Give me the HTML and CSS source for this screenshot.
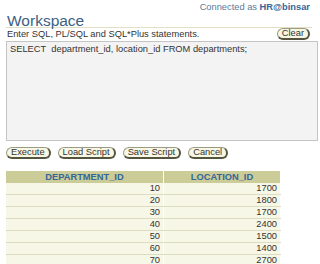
FILE: index.html
```html
<!DOCTYPE html>
<html lang="en">
<head>
  <meta charset="UTF-8" />
  <title>Workspace</title>
  <link rel="stylesheet" href="styles.css">
</head>
<body>
  <div class="topbar">Connected as <b>HR@binsar</b></div>
  <div class="page">
    <h1>Workspace</h1>
    <div class="hint-row">
      <span class="hint">Enter SQL, PL/SQL and SQL*Plus statements.</span>
      <button class="button">Clear</button>
    </div>
    <div class="editor">SELECT&nbsp; department_id, location_id FROM departments;</div>

    <div class="actions">
      <button class="button">Execute</button>
      <button class="button">Load Script</button>
      <button class="button">Save Script</button>
      <button class="button">Cancel</button>
    </div>

    <table class="results">
      <tr><th>DEPARTMENT_ID</th><th>LOCATION_ID</th></tr>
      <tr><td>10</td><td>1700</td></tr>
      <tr><td>20</td><td>1800</td></tr>
      <tr><td>30</td><td>1700</td></tr>
      <tr><td>40</td><td>2400</td></tr>
      <tr><td>50</td><td>1500</td></tr>
      <tr><td>60</td><td>1400</td></tr>
      <tr><td>70</td><td>2700</td></tr>
    </table>
  </div>
</body>
</html>
```

FILE: styles.css
```css
body {
  font-family: 'Liberation Sans', Arial, sans-serif;
  background-color: #ffffff;
  color: #333333;
  margin: 0;
  font-size: 9.3px;
}

.topbar {
  height: 14px;
  line-height: 14px;
  text-align: right;
  padding-right: 10px;
  color: #5a7a99;
}

.topbar b {
  color: #336699;
}

.page {
  padding-left: 6px;
  padding-right: 2px;
}

h1 {
  margin: 1px 6px 0 0;
  padding-left: 1px;
  font-size: 15.5px;
  font-weight: normal;
  line-height: 12px;
  color: #3a6185;
  border-bottom: 1px solid #e2dfc4;
}

.hint-row {
  display: flex;
  justify-content: space-between;
  align-items: center;
  height: 12px;
  padding: 0 8px 0 1px;
}

.hint {
  color: #333333;
}

.button {
  font-family: 'Liberation Sans', Arial, sans-serif;
  font-size: 9.3px;
  color: #333333;
  background-color: #f7f7e4;
  border: 1px solid #9c9c84;
  border-right: 2px solid #55553f;
  border-bottom: 2px solid #55553f;
  border-radius: 7px;
  height: 12px;
  line-height: 9px;
  padding: 0 4px;
  margin: 0;
}

.editor {
  height: 94px;
  margin-top: 1px;
  padding: 2px 3px;
  background-color: #f3f3f3;
  border: 1px solid #c4c4c4;
  color: #333333;
}

.actions {
  display: flex;
  gap: 7px;
  margin-top: 6px;
}

.results {
  border-collapse: collapse;
  margin-top: 12px;
  width: 275px;
}

.results th {
  background-color: #cccc99;
  color: #336699;
  font-weight: bold;
  height: 12px;
  padding: 0;
  border-right: 1px solid #ffffff;
  text-align: center;
}

.results td {
  background-color: #f7f7e7;
  height: 11px;
  padding: 0 3px;
  text-align: right;
  border-bottom: 1px solid #dcdcc0;
  border-right: 1px solid #ffffff;
  line-height: 11px;
}

.results th:first-child,
.results td:first-child {
  width: 151px;
}
```
